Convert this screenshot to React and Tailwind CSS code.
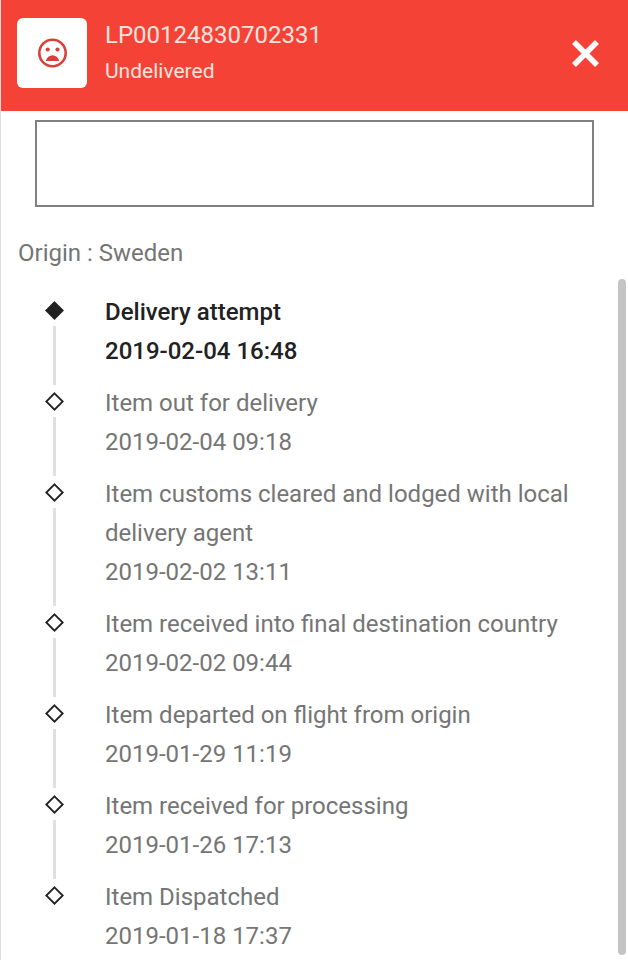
import React from 'react';

const events = [
  { title: 'Delivery attempt', time: '2019-02-04 16:48' },
  { title: 'Item out for delivery', time: '2019-02-04 09:18' },
  { title: 'Item customs cleared and lodged with local delivery agent', time: '2019-02-02 13:11' },
  { title: 'Item received into final destination country', time: '2019-02-02 09:44' },
  { title: 'Item departed on flight from origin', time: '2019-01-29 11:19' },
  { title: 'Item received for processing', time: '2019-01-26 17:13' },
  { title: 'Item Dispatched', time: '2019-01-18 17:37' },
];

function SadFace() {
  return (
    <svg viewBox="0 0 30 30" className="size-[30px]" fill="none" aria-hidden="true">
      <circle cx="15.500" cy="15" r="13.200" stroke="#d8413a" strokeWidth="2.600" />
      <circle cx="10.700" cy="11.500" r="2.100" fill="#d8413a" />
      <circle cx="20.500" cy="11.500" r="2.100" fill="#d8413a" />
      <path d="M8.700 23c1.100-3.600 3.800-5.700 6.800-5.700s5.700 2.100 6.800 5.700z" fill="#d8413a" />
    </svg>
  );
}

function Diamond({ filled }) {
  return (
    <svg viewBox="0 0 19 19" className="size-[19px] shrink-0" aria-hidden="true">
      <path
        d="M9.500 1.300 17.700 9.500 9.500 17.700 1.300 9.500Z"
        fill={filled ? '#212121' : '#ffffff'}
        stroke="#212121"
        strokeWidth="1.800"
      />
    </svg>
  );
}

function Event({ event, current, last }) {
  return (
    <li className="flex gap-[41px]">
      <div className="flex w-[19px] shrink-0 flex-col items-center gap-1.5 pt-2">
        <Diamond filled={current} />
        {!last && <div className="-mb-px w-[3px] flex-1 bg-[#e0e0e0]" />}
      </div>
      <div
        className={
          (current ? 'font-medium text-[#212121] ' : 'text-[#757575] ') + (last ? '' : 'pb-[13px]')
        }
      >
        <p>{event.title}</p>
        <p>
          <time>{event.time}</time>
        </p>
      </div>
    </li>
  );
}

export default function App() {
  return (
    <div className="flex min-h-screen flex-col border-l border-[#dcdcdc] bg-white font-[Roboto,sans-serif] text-[24px] leading-[39px] text-[#757575]">
      <header className="flex items-start bg-[#f44336] pt-[18px] pr-7 pb-[23px] pl-4 text-[#fde3df]">
        <div className="flex size-[70px] shrink-0 items-center justify-center rounded-md bg-white">
          <SadFace />
        </div>
        <div className="ml-[18px] flex-1">
          <h1 className="leading-[34px]">LP00124830702331</h1>
          <p className="mt-0.5 text-[21px] leading-[34px]">Undelivered</p>
        </div>
        <button type="button" aria-label="Close" className="mt-5 text-white">
          <svg viewBox="0 0 30 30" className="size-[30px]" fill="none" aria-hidden="true">
            <path d="M4 4 27 27M27 4 4 27" stroke="currentColor" strokeWidth="5.500" />
          </svg>
        </button>
      </header>
      <textarea
        aria-label="Notes"
        className="mx-[34px] mt-[9px] block h-[87px] resize-none border-2 border-[#808080] bg-white px-3"
      />
      <p className="mt-[27px] pl-[17px]">Origin : Sweden</p>
      <div className="mt-1.5 flex flex-1 pr-0.5">
        <ol className="flex-1 pt-3.5 pr-4 pb-1 pl-11">
          {events.map((event, i) => (
            <Event key={event.time} event={event} current={i === 0} last={i === events.length - 1} />
          ))}
        </ol>
        <div className="mb-[5px] w-2 shrink-0 rounded-full bg-[#c4c4c4]" />
      </div>
    </div>
  );
}
